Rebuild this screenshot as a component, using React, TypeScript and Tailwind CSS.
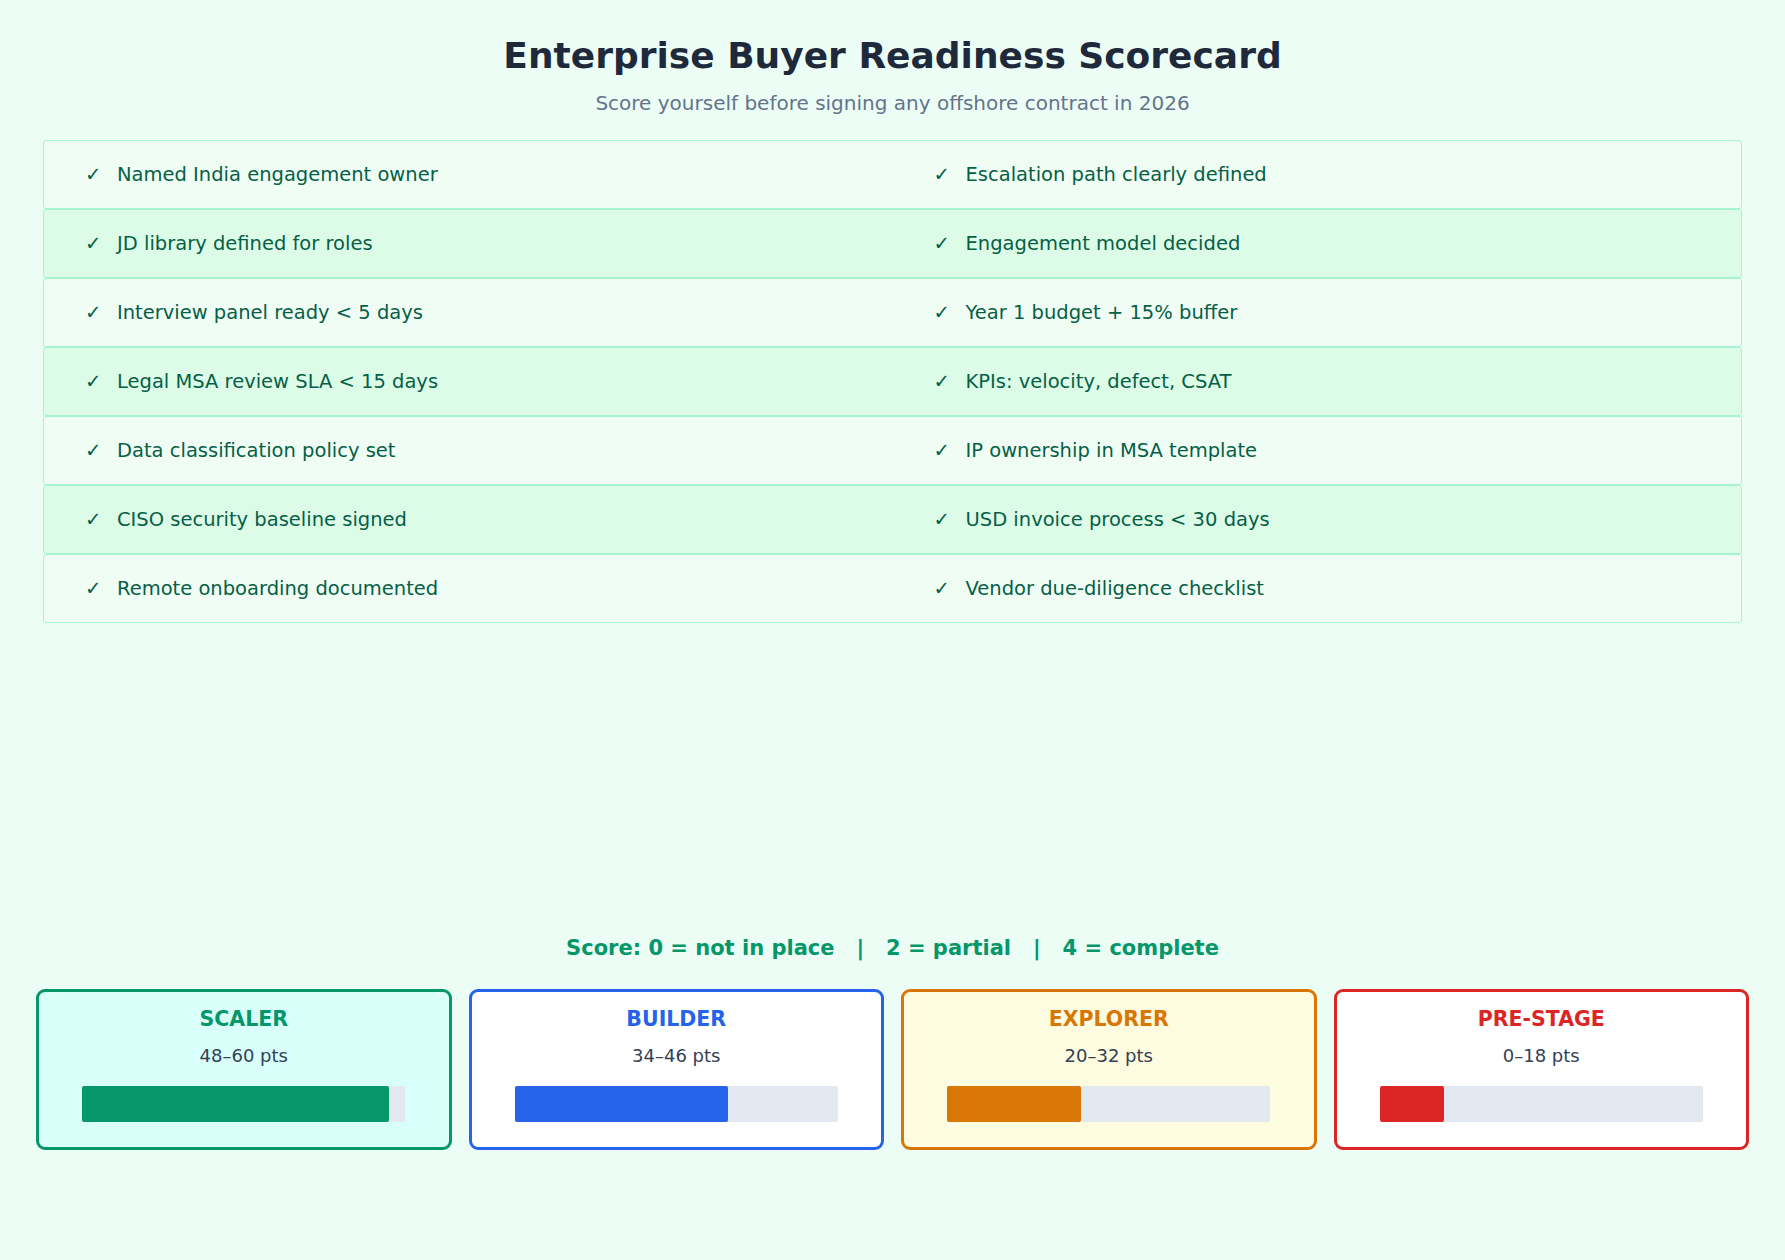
import React from 'react';

const rows = [
  ['Named India engagement owner', 'Escalation path clearly defined'],
  ['JD library defined for roles', 'Engagement model decided'],
  ['Interview panel ready < 5 days', 'Year 1 budget + 15% buffer'],
  ['Legal MSA review SLA < 15 days', 'KPIs: velocity, defect, CSAT'],
  ['Data classification policy set', 'IP ownership in MSA template'],
  ['CISO security baseline signed', 'USD invoice process < 30 days'],
  ['Remote onboarding documented', 'Vendor due-diligence checklist'],
];

const tiers = [
  { name: 'SCALER', pts: '48–60 pts', pct: 95, box: 'border-[#059669] bg-[#d9fffb]', text: 'text-[#059669]', bar: 'bg-[#059669]' },
  { name: 'BUILDER', pts: '34–46 pts', pct: 66, box: 'border-[#2563eb] bg-white', text: 'text-[#2563eb]', bar: 'bg-[#2563eb]' },
  { name: 'EXPLORER', pts: '20–32 pts', pct: 41.5, box: 'border-[#d97706] bg-[#fefce0]', text: 'text-[#d97706]', bar: 'bg-[#d97706]' },
  { name: 'PRE-STAGE', pts: '0–18 pts', pct: 20, box: 'border-[#dc2626] bg-white', text: 'text-[#dc2626]', bar: 'bg-[#dc2626]' },
];

const App: React.FC = () => {
  return (
    <div className='w-[1785px] h-[1260px] bg-[#ecfdf5] flex flex-col' style={{ fontFamily: '"DejaVu Sans", sans-serif' }}>
      <h1 className='text-center text-[36px] font-bold text-[#1e293b] pt-[34px] leading-[44px]'>Enterprise Buyer Readiness Scorecard</h1>
      <p className='text-center text-[20px] text-[#64748b] mt-[12px] leading-[26px]'>Score yourself before signing any offshore contract in 2026</p>

      <div className='mx-[43px] mt-[24px] flex flex-col'>
        {rows.map((r, i) => (
          <div key={i} className={`h-[69px] grid grid-cols-2 items-center border border-[#a7f3d0] rounded-[3px] text-[19.5px] text-[#065f46] ${i % 2 ? 'bg-[#dcfce7]' : 'bg-[#f0fdf4]'}`}>
            {r.map((t) => (
              <div key={t} className='flex items-center pl-[41px]'>
                <span className='w-[32px]'>✓</span>
                <span>{t}</span>
              </div>
            ))}
          </div>
        ))}
      </div>

      <p className='mt-[310px] text-center text-[21px] font-bold text-[#059669] whitespace-pre'>Score: 0 = not in place   |   2 = partial   |   4 = complete</p>

      <div className='mx-[36px] mt-[24px] grid grid-cols-4 gap-[17px]'>
        {tiers.map((t) => (
          <div key={t.name} className={`h-[161px] border-[3px] rounded-[9px] flex flex-col items-center ${t.box}`}>
            <div className={`mt-[12px] text-[20.5px] font-bold ${t.text}`}>{t.name}</div>
            <div className='mt-[8px] text-[18px] text-[#334155]'>{t.pts}</div>
            <div className='mt-[17px] w-[323px] h-[36px] bg-[#e2e8f0] rounded-[2px]'>
              <div className={`h-full rounded-[2px] ${t.bar}`} style={{ width: `${t.pct}%` }} />
            </div>
          </div>
        ))}
      </div>
    </div>
  );
};

export default App;
